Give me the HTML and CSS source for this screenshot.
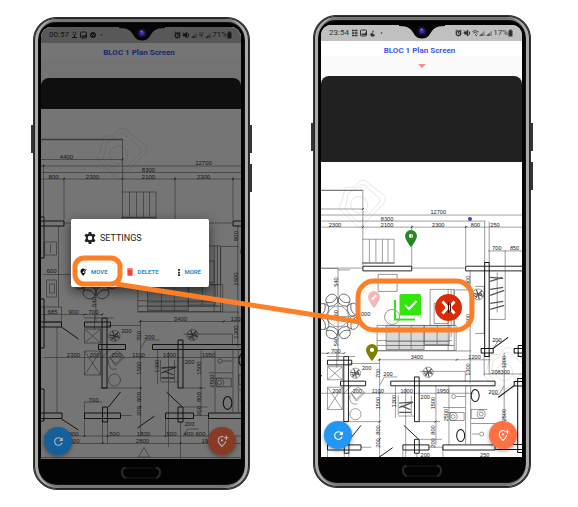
FILE: index.html
```html
<!DOCTYPE html>
<html lang="en">
<head>
<meta charset="utf-8">
<title>BLOC 1 Plan Screen</title>
<link rel="stylesheet" href="styles.css">
</head>
<body>
<svg class="defs" aria-hidden="true">
  <defs>
    <symbol id="refresh" viewBox="0 0 24 24"><path fill="currentColor" d="M17.65 6.35A8 8 0 1 0 19.73 14h-2.1A6 6 0 1 1 16.2 7.8L13 11h7V4z"/></symbol>
    <symbol id="add-place" viewBox="0 0 24 24"><path fill="none" stroke="currentColor" stroke-width="2" d="M14 3.6A7 7 0 0 0 4 10c0 4 4 8 7 11 3-3 6.500-6.500 7-10M19 1v8M15 5h8"/><circle cx="11" cy="10" r="2" fill="currentColor"/></symbol>
    <symbol id="pin" viewBox="0 0 14 20"><path fill="currentColor" fill-rule="evenodd" d="M7 0a7 7 0 0 0-7 7c0 5 7 13 7 13s7-8 7-13a7 7 0 0 0-7-7zm0 4.500a2.500 2.500 0 1 1 0 5 2.500 2.500 0 0 1 0-5z"/></symbol>
    <symbol id="status-left" viewBox="0 0 36 8">
      <rect x="9.500" y="1" width="6" height="6" rx="1" fill="none" stroke="currentColor"/><path d="M10 6l2-2 1 1 2-2v3z" fill="currentColor"/>
      <circle cx="30.500" cy="4" r="0.800" fill="currentColor"/>
    </symbol>
    <symbol id="alarm" viewBox="0 0 16 8">
      <circle cx="3.500" cy="4.300" r="2.300" fill="none" stroke="currentColor" stroke-width="1.300"/><path d="M.5 2L2 .8M5 .8L6.500 2M3.500 3v1.500h1" stroke="currentColor" fill="none"/>
      <path d="M9 3h1.500L13 1v6l-2.500-2H9zM8.500 1L14 7" fill="currentColor" stroke="currentColor" stroke-width=".6"/><path d="M14.500 2.500v3" stroke="currentColor"/>
    </symbol>
    <symbol id="signal" viewBox="0 0 7 8"><path d="M0 7L6 1.500V7z" fill="currentColor" opacity=".35"/><path d="M0 7L3.500 4V7z" fill="currentColor" opacity=".7"/></symbol>
    <symbol id="battery" viewBox="0 0 5 8"><path d="M1.500 .5h2v1h1v6h-4v-6h1z" fill="currentColor"/></symbol>
    <symbol id="notch" viewBox="0 0 46 22">
      <path d="M0 0H46V5C36 5 34 8 31 13C28 19 18 19 15 13C12 8 10 5 0 5z" fill="#050507"/>
      <circle cx="23" cy="10" r="4.500" fill="#15123b"/><circle cx="23" cy="10" r="2.500" fill="#37309a"/><circle cx="22.500" cy="8.500" r="1" fill="#8a86cc"/>
    </symbol>
    <symbol id="home" viewBox="0 0 44 14"><path d="M5 2H39M5 12H39" stroke="#15161a" stroke-width="1"/><path d="M7 2Q3 2 3 6Q3 11 7 12M37 2Q41 2 41 6Q41 11 37 12" fill="none" stroke="#292b31" stroke-width="2"/></symbol>

    <g id="chair"><path d="M-4 -10C-6 -15 -4 -18 0 -18S6 -15 4 -10Q0 -8 -4 -10zM-5 -14Q0 -10 5 -14"/></g>
    <g id="plant"><circle r="5.500"/><path stroke-width="1.200" d="M-5 -1L0 0L-3 4M0 0L4 -4M0 0L5 2M0 0L1 5M0 0L-2 -5M2 -2l2 3M-4 1l3 2"/></g>
    <g id="camera"><path d="M-3 -25Q2 -29 7 -23L24 -10Q27 -6 23 -1L1 22Q-3 27 -7 21L-22 7Q-27 3 -22 -2L-19 -14Q-20 -19 -14 -19L-8 -19Q-6 -22 -3 -25z"/><path d="M-3 -20Q1 -24 5 -19L18 -8Q21 -5 18 -1L1 16Q-3 20 -7 16L-17 6Q-20 3 -17 -1L-15 -12z"/><circle cx="-3" r="9"/></g>

    <g id="floorplan">
      <g class="watermark">
        <use href="#camera" x="122" y="155"/>
        <use href="#camera" x="278" y="335"/>
      </g>
      <g class="thin">
        <path d="M41 159.500H123M41 166H295M41 172.500H255M41 179H295M44 164V217M64.500 177V220M123 139V220M175.500 177V221M233.500 177V220M64 223H123M176 223H233"/>
        <path d="M122.500 192h34M130 192v25M137 192v25M144 192v25M150 192v25M156.500 192v25"/>
        <path d="M59 226V307M45 242h12v13H45zM51 244v9M47 280h10v17H47zM50 284h5v9h-5zM44 274.500H71M41 307h21v15H45v-15"/>
        <path d="M41 314.500H103M95 314V330M57.500 327V413M85 329h16v14H85zl16 14M85 343l16-14M85 351h16v24H85zl16 24M85 375l16-24"/>
        <path d="M44 357.500H242M108 325.500H141M139 321.500H260M141 320V436M141 349l5-9h14M100 388H142M183 388H206M184 334h49v11M201.500 349V413M215.500 349V413M158 350V384"/>
        <path d="M110 357l6 9 9-9-7-6zM109 359q-1 12 8 10M111 358l5 6 8-8"/>
        <circle cx="115" cy="380" r="6"/><use href="#plant" x="115" y="336"/><use href="#plant" x="193" y="335"/>
        <path d="M161 360v21M169 352v95M175 360v21M161 382h17"/><path stroke-width="1.300" d="M162 368l14-1M162 373l15-6M162 378h13M164 371l10 4"/>
        <path d="M85 402h18M85 402v34M103 422v22M44 436H242M44 443.500H242M108 422v22M166 419v17M121 415.500h11M181 422v37M184 407h24M194 415.500h15v21M184 436l4-7h11M103 357l8-8"/>
        <path d="M139 457l5.500-9.500 5.500 9.500zM41 457.500H242"/>
      </g>
      <path class="wide" d="M41 139.500H123M122 217.500H157"/>
      <g class="ticks"><path d="M43 167l2-2M63.500 180l2-2M122 180l2-2M174.500 180l2-2M232.500 180l2-2M122 160.500l2-2M84 315.500l2-2M102 315.500l2-2M140 322.500l2-2M223 322.500l2-2M140 358.500l2-2M140 389l2-2M140 408l2-2M200 389l2-2M84 437l2-2M107 437l2-2M165 437l2-2M180 444l2-2M102 444l2-2"/></g>
      <g class="wall">
        <path d="M41 221h23.500v5H41zM123 221h52.500v5H123zM295 221h-61.500v5H295M41 217h3.500v41H41M41 299h3.500v49H41M41 389h3.500v32H41"/>
        <path d="M41 322h21v5H41zM85 322h26v5H85zM102.500 318h5v70h-5zM99 344.500h27v5H99zM153 344.500h112v5H153zM178.500 340h5v48h-5z"/>
        <path d="M41 413h21.500v5.500H41zM85 413h36v5.500H85zM103 407h5v15h-5zM166 413h28v5.500h-28zM209 413h56v5.500h-56zM178.500 407h5v15h-5z"/>
        <path d="M62 327l17 12M109 407l12-15M155 416l-17 12M167 392l16 15M62 419l17 11"/>
      </g>
      <!-- Living room and east wing, drawn at their own survey scale -->
      <g transform="translate(-267.100 -64.840) scale(1.0753)">
        <g class="thin">
          <circle cx="338" cy="316" r="10.500"/>
          <g transform="translate(338 316) scale(1.200 1.300)">
            <use href="#chair" transform="rotate(22)"/><use href="#chair" transform="rotate(67)"/><use href="#chair" transform="rotate(112)"/><use href="#chair" transform="rotate(157)"/><use href="#chair" transform="rotate(202)"/><use href="#chair" transform="rotate(247)"/><use href="#chair" transform="rotate(292)"/><use href="#chair" transform="rotate(337)"/>
          </g>
          <path d="M321 268h17v92M338 269.500h12M326 316h24M378 274h19v17h-19zM327 356h28"/>
          <circle cx="392" cy="316.500" r="7.500"/>
          <path d="M430 289h24v36h-24zM434 303h14v20h-14zM448 289v61M451 289v48M454 289v61M377 325h79v25h-79zM377 340h75M377 345h77"/>
          <path fill="#b9b9b9" fill-opacity=".55" d="M386 325h38v24h-38zM424 325h25v19h-25z"/>
          <path d="M399 325v24M411 325v24M437 325v19M386 341h63M386 345h66"/>
          <path d="M455 289.500h16M470 270v113M475 286h9v47h-9M377 350.500h94M484.500 221v41M489 221v41M488 250.500h34M505 250v69h-16M497 272v40"/>
          <use href="#plant" x="478" y="294"/>
          <path stroke-width="1.200" d="M490 277l13 1M490 281l12-4M490 289l13-2M490 295l14-5M490 303l13-2M490 309l14-4"/>
          <path d="M484 353v22M489 353v21M484 373.500h38M504 352v93M492 394h7l5-9M499 339l-6 9M465.500 385v59M470.500 385v59M443 407h22M471 423h34"/>
          <circle cx="453.500" cy="396" r="2"/><path d="M456 396h9M472 433.500h7"/><circle cx="481.500" cy="433.500" r="2"/>
          <circle cx="453" cy="416" r="4"/><circle cx="453" cy="416" r="2"/><path d="M447 412h17v8h-14M450 412v8"/>
          <circle cx="481" cy="413.500" r="4"/><circle cx="481" cy="413.500" r="2"/><path d="M487 409h-16v9h13"/>
        </g>
        <g class="wall">
          <ellipse cx="475" cy="395" rx="4" ry="6"/><ellipse cx="460.500" cy="435" rx="4" ry="6"/>
          <path d="M484.500 262h4.500v94h-4.500zM481 348h12v4.500h-12zM522 345h-4v11h4M522 348h-8v4.500h8M522 378h-4.500v74h4.500M522 381h-8v4.500h8M495 444h27M495 449h27M493 348l15-11M498 397l16-12"/>
        </g>
      </g>
    </g>
  </defs>
</svg>

<main class="stage">
  <section class="phone phone-first" aria-label="Plan screen with settings dialog">
    <i class="key key-left"></i><i class="key key-power"></i><i class="key key-volume"></i>
    <svg class="notch" aria-hidden="true"><use href="#notch"/></svg>
    <div class="screen">
      <div class="status">
        <span>00:57</span>
        <svg class="status-left" viewBox="0 0 36 8" aria-hidden="true"><path d="M1 6.500h5M3.500 6V4" stroke="currentColor"/><circle cx="3.500" cy="2.500" r="1.500" fill="none" stroke="currentColor" stroke-width=".7"/><use href="#status-left"/><circle cx="22" cy="4" r="3" fill="currentColor"/><path d="M20 5l1.500-1.500 1 1L24 3" stroke="#aaa" fill="none"/></svg>
        <span class="spring"></span>
        <svg class="alarm" aria-hidden="true"><use href="#alarm"/></svg>
        <svg class="signal" aria-hidden="true"><use href="#signal"/></svg>
        <svg class="signal" viewBox="0 0 7 8" aria-hidden="true"><path d="M1 2h5M1 4h5M3.500 4v3" stroke="currentColor" stroke-width=".8" stroke-dasharray="2 .5"/></svg>
        <svg class="signal" aria-hidden="true"><use href="#signal"/></svg>
        <span>71%</span>
        <svg class="battery" aria-hidden="true"><use href="#battery"/></svg>
      </div>
      <h1 class="title">BLOC 1 Plan Screen</h1>
      <div class="subhead"></div>
      <div class="panel"></div>
      <div class="plan">
        <svg class="drawing" viewBox="41 109 201 350" preserveAspectRatio="xMidYMin slice" role="img" aria-label="Floor plan"><use href="#floorplan"/><g class="figures" data-from="41" data-to="242" data-bottom="459"></g></svg>
      </div>
      <div class="backdrop"></div>
      <div class="dialog" role="dialog" aria-labelledby="settings-title">
        <h2 id="settings-title"><svg viewBox="0 0 24 24" aria-hidden="true"><path fill="currentColor" fill-rule="evenodd" d="M9.500 0h5l.6 3.400 2 1.200L20.400 3.400l2.500 4.300-2.600 2.200v4.200l2.600 2.200-2.500 4.300-3.300-1.200-2 1.200-.6 3.400h-5l-.6-3.400-2-1.200-3.300 1.200-2.500-4.300 2.600-2.200V9.900L1.100 7.700l2.500-4.300 3.300 1.200 2-1.200zM12 7.500a4.500 4.500 0 1 0 0 9 4.500 4.500 0 0 0 0-9z"/></svg>SETTINGS</h2>
        <div class="actions">
          <button type="button"><svg class="icon-move" viewBox="0 0 16 18" aria-hidden="true"><path fill="#111" d="M11 2A6.500 6.500 0 0 0 1 7.500C1 12 5 15 7 18c3-4 6-7 6-11l-4 4-3 .5.500-3L12 3z"/><path d="M9 9l5.500-6.500" stroke="#111" stroke-width="2.200"/></svg>MOVE</button>
          <button type="button"><svg class="icon-delete" viewBox="0 0 14 18" aria-hidden="true"><path fill="#f44336" d="M0 1h4l1-1h4l1 1h4v2H0zM1 4h12v12q0 2-2 2H3q-2 0-2-2z"/></svg>DELETE</button>
          <button type="button"><svg class="icon-more" viewBox="0 0 4 16" aria-hidden="true"><path fill="#111" d="M0 0h4v4H0zM0 6h4v4H0zM0 12h4v4H0z"/></svg>MORE</button>
        </div>
      </div>
      <button type="button" class="fab fab-refresh" aria-label="Refresh"><svg><use href="#refresh"/></svg></button>
      <button type="button" class="fab fab-add" aria-label="Add pin"><svg><use href="#add-place"/></svg></button>
    </div>
    <svg class="home" aria-hidden="true"><use href="#home"/></svg>
  </section>

  <section class="phone phone-second" aria-label="Plan screen while moving a pin">
    <i class="key key-left"></i><i class="key key-power"></i><i class="key key-volume"></i>
    <svg class="notch" aria-hidden="true"><use href="#notch"/></svg>
    <div class="screen">
      <div class="status">
        <span>23:54</span>
        <svg class="status-left" viewBox="0 0 36 8" aria-hidden="true"><path d="M1 1.500h6M1 4h6M1 6.500h6" stroke="currentColor" stroke-width="1.300" stroke-dasharray="2.500 .5"/><use href="#status-left"/><path d="M22 1l1 2-2 1 3 2-1 1.500h-3L19 5l2-1z" fill="currentColor"/></svg>
        <span class="spring"></span>
        <svg class="alarm" aria-hidden="true"><use href="#alarm"/></svg>
        <svg class="signal" viewBox="0 0 7 8" aria-hidden="true"><path d="M.5 2.500Q3.500 0 6.500 3M1.500 4q2-2 4 1M3 5.500l2 1.500" fill="none" stroke="currentColor" stroke-width=".9"/></svg>
        <svg class="signal" aria-hidden="true"><use href="#signal"/></svg>
        <svg class="signal" aria-hidden="true"><use href="#signal"/></svg>
        <span>17%</span>
        <svg class="battery" aria-hidden="true"><use href="#battery"/></svg>
      </div>
      <h1 class="title">BLOC 1 Plan Screen</h1>
      <div class="subhead"><svg class="caret" viewBox="0 0 8 4" aria-hidden="true"><path fill="#f58c88" d="M0 0h8L4 4z"/></svg></div>
      <div class="panel"></div>
      <div class="plan">
        <svg class="drawing" viewBox="78 109 216 317" preserveAspectRatio="xMidYMin slice" role="img" aria-label="Floor plan"><use href="#floorplan"/><g class="figures" data-from="78" data-to="294" data-bottom="426"></g></svg>
        <svg class="pin pin-green" aria-hidden="true"><use href="#pin"/></svg>
        <svg class="pin pin-olive" aria-hidden="true"><use href="#pin"/></svg>
        <svg class="pin pin-moving" viewBox="0 0 14 20" aria-hidden="true"><path fill="currentColor" d="M7 0a7 7 0 0 0-7 7c0 5 7 13 7 13s7-8 7-13a7 7 0 0 0-7-7z"/><path d="M4.500 10L9.500 5" stroke="#fff" stroke-width="2.200"/></svg>
        <i class="dot"></i>
        <button type="button" class="confirm" aria-label="Confirm move"><svg viewBox="0 0 27 27"><rect x="5.500" y="0" width="21.500" height="21.500" rx="1.500" fill="#32e60c"/><path d="M1 6v19.500h20" fill="none" stroke="#32e60c" stroke-width="2"/><path d="M11 11l4 4 7.500-8" fill="none" stroke="#fff" stroke-width="2.200"/></svg></button>
        <button type="button" class="cancel" aria-label="Cancel move"><svg viewBox="0 0 27 27"><circle cx="13.500" cy="13.500" r="13.500" fill="#dc2a06"/><path d="M7.500 7.500L11.500 12v3L7.500 19.500M19.500 7.500L15.500 12v3l4 4.500" fill="none" stroke="#fff" stroke-width="2.800"/><path d="M13.500 8v11M15.500 9.500v8" stroke="#4b0d04"/></svg></button>
      </div>
      <button type="button" class="fab fab-refresh" aria-label="Refresh"><svg><use href="#refresh"/></svg></button>
      <button type="button" class="fab fab-add" aria-label="Add pin"><svg><use href="#add-place"/></svg></button>
    </div>
    <svg class="home" aria-hidden="true"><use href="#home"/></svg>
  </section>

  <svg class="callout" viewBox="0 0 578 507" aria-hidden="true">
    <g fill="none" stroke="#ff7f27" stroke-width="5">
      <rect x="75" y="258" width="45" height="26" rx="9"/>
      <path d="M116 284L360 322"/>
      <rect x="358" y="281" width="114" height="49" rx="16"/>
    </g>
  </svg>
</main>
<script src="plan.js"></script>
</body>
</html>
```
FILE: styles.css
```css
* { box-sizing: border-box; }

body {
  margin: 0;
  background: #fff;
  font-family: Roboto, "Liberation Sans", sans-serif;
}

svg { display: block; }
.defs { position: absolute; width: 0; height: 0; }

.stage {
  position: relative;
  display: grid;
  grid-template-columns: 33fr 217fr 63fr 218fr 47fr;
  align-items: start;
  padding: 15px 0 17px;
}

.phone {
  position: relative;
  padding: 9px 8px 0 7px;
  border: 1px solid #333;
  border-radius: 23px 23px 24px 24px;
  background: #030304;
  box-shadow: inset 0 0 0 1px #222, inset 3px 0 0 1px #aaa, inset -3px 0 0 1px #aaa, inset 0 0 0 4px #777, inset 0 0 0 5px #111;
}
.phone-first { grid-column: 2; margin-top: 2px; }
.phone-second { grid-column: 4; }

.notch {
  position: absolute;
  z-index: 2;
  top: 5px;
  left: calc(50% - 23px);
  width: 46px;
  height: 22px;
}

.key { position: absolute; width: 2px; background: #333; }
.key-left { left: -3px; top: 107px; height: 28px; }
.key-power { right: -3px; top: 107px; height: 28px; }
.key-volume { right: -3px; top: 146px; height: 28px; }

.home { width: 44px; height: 14px; margin: 7px auto 9px; }

.screen {
  position: relative;
  overflow: hidden;
  border-radius: 10px 10px 0 0;
  background: #fafafa;
}

.status {
  display: flex;
  align-items: center;
  height: 16px;
  padding: 0 9px 0 8px;
  background: #c0c0c0;
  color: #333;
  font-size: 8px;
  line-height: 10px;
}
.spring { flex: 1; }
.status-left { width: 36px; height: 8px; margin-left: 2px; }
.alarm { width: 16px; height: 8px; margin-right: 1px; }
.signal { width: 7px; height: 8px; }
.battery { width: 5px; height: 8px; }

.title {
  margin: 0;
  padding: 4px 4px 0 0;
  background: #fff;
  color: #4058f0;
  font-size: 8px;
  font-weight: 700;
  line-height: 11px;
  text-align: center;
}

.subhead { height: 20px; padding-top: 8px; }
.caret { width: 8px; height: 4px; margin: 0 auto; }

.panel { height: 31px; border-radius: 8px 8px 0 0; background: #212121; }
.phone-second .panel { height: 86px; }

.plan { position: relative; height: 350px; background: #fff; overflow: hidden; }
.phone-second .plan { height: 295px; }
.drawing { width: 100%; height: 100%; }

.thin { fill: none; stroke: #555; stroke-width: 0.6px; }
.ticks { fill: none; stroke: #222; stroke-width: 1px; }
.wide { fill: none; stroke: #777; stroke-width: 1.500px; }
.wall { fill: none; stroke: #111; stroke-width: 1px; }
.watermark { fill: none; stroke: #ddd; stroke-width: 0.8px; }
.phone-first .drawing { opacity: 0.9; }
.figures text {
  fill: #222;
  font-family: "Liberation Sans", Arial, sans-serif;
  font-size: 6px;
  text-anchor: middle;
}

.backdrop { position: absolute; inset: 0; background: rgba(0, 0, 0, 0.54); }

.dialog {
  position: absolute;
  top: 192px;
  left: 15%;
  right: 16%;
  padding: 12px 8px 8px 9px;
  border-radius: 2px;
  background: #fff;
  box-shadow: 0 4px 12px rgba(0, 0, 0, 0.6);
}
.dialog h2 {
  display: flex;
  align-items: center;
  gap: 4px;
  margin: 0 0 20px 4px;
  color: #222;
  font-size: 9px;
  font-weight: 400;
  line-height: 14px;
}
.dialog h2 svg { width: 12px; height: 12px; }
.actions { display: flex; justify-content: space-between; }

button { padding: 0; border: 0; background: none; font-family: inherit; }
.actions button {
  display: flex;
  align-items: center;
  gap: 4px;
  color: #2a93cc;
  font-size: 6px;
  font-weight: 700;
  line-height: 14px;
}
.icon-move { width: 7px; height: 8px; }
.icon-delete { width: 6px; height: 8px; }
.icon-more { width: 2px; height: 7px; }

.fab {
  position: absolute;
  display: grid;
  place-items: center;
  bottom: 8px;
  width: 28px;
  height: 28px;
  border-radius: 50%;
  color: #fff;
  box-shadow: 0 2px 4px rgba(0, 0, 0, 0.35);
}
.fab svg { width: 13px; height: 13px; }
.fab-refresh { left: 3px; background: #2196f3; }
.fab-add { right: 5px; background: #ff7043; }
.phone-first .fab { bottom: 4px; color: #b5b5b5; }
.phone-first .fab-refresh { background: #14609c; }
.phone-first .fab-add { background: #873b25; }

.pin { position: absolute; width: 12px; height: 17px; }
.pin-green { left: 84px; top: 68px; color: #218a21; }
.pin-olive { left: 45px; top: 182px; color: #808000; }
.pin-moving { left: 47px; top: 129px; color: #f9b6b4; }
.dot { position: absolute; left: 147px; top: 55px; width: 4px; height: 4px; border-radius: 50%; background: #3840dc; }
.confirm, .cancel { position: absolute; width: 27px; height: 27px; }
.confirm { left: 73px; top: 132px; }
.cancel { left: 114px; top: 132px; }

.callout { position: absolute; z-index: 3; inset: 0; width: 100%; pointer-events: none; }
```
FILE: plan.js
```js
// Dimension figures of the floor plan: text, centre x, baseline y, 1 when it reads upwards.
const figures = [
  ["4400", 67, 159], ["12700", 204, 165], ["8300", 149, 172],
  ["800", 54, 179], ["2300", 93, 179], ["2100", 149, 179], ["2300", 204, 179],
  ["600", 52, 273], ["800", 238, 236, 1], ["2600", 238, 279, 1],
  ["685", 53, 314], ["900", 74, 314], ["700", 94, 314],
  ["3400", 181, 321], ["1200", 243, 321], ["1300", 238, 332, 1],
  ["200", 127, 333], ["700", 141, 336, 1], ["200", 150, 339],
  ["2300", 74, 357], ["200", 95, 357], ["200", 117, 357], ["1100", 139, 357],
  ["1000", 170, 357], ["1950", 209, 357], ["200", 190, 364],
  ["1500", 141, 368, 1], ["1300", 159, 366, 1], ["1500", 201, 368, 1], ["2500", 214, 381, 1],
  ["800", 141, 397, 1], ["800", 201, 397, 1], ["200", 141, 411, 1], ["200", 201, 411, 1],
  ["700", 94, 402], ["200", 190, 426], ["250", 254, 426],
  ["900", 74, 436], ["500", 115, 436], ["1800", 144, 436], ["500", 172, 436], ["400", 189, 436], ["600", 201, 436],
  ["300", 75, 443], ["2800", 143, 443], ["195", 207, 443],
  ["800", 244, 179], ["250", 265, 179], ["700", 267, 204], ["850", 286, 204],
  ["540", 96, 238, 1], ["560", 96, 273, 1], ["540", 96, 302, 1], ["000", 126, 275],
  ["200", 267, 302], ["1200", 277, 324, 1], ["208300", 271, 337], ["200", 263, 358], ["2500", 277, 381, 1]
];

// Shortened figure at the east edge of the first screen.
const edgeFigures = { 242: [["120", 236, 321]] };

for (const layer of document.querySelectorAll(".figures")) {
  const { from, to, bottom } = layer.dataset;
  for (const [value, x, y, upright] of figures.concat(edgeFigures[to] || [])) {
    if (x < +from + 5 || x > +to - 3 || y > +bottom) continue;
    const text = document.createElementNS("http://www.w3.org/2000/svg", "text");
    text.setAttribute("x", x);
    text.setAttribute("y", y);
    if (upright) text.setAttribute("transform", `rotate(-90 ${x} ${y})`);
    text.textContent = value;
    layer.append(text);
  }
}
```
